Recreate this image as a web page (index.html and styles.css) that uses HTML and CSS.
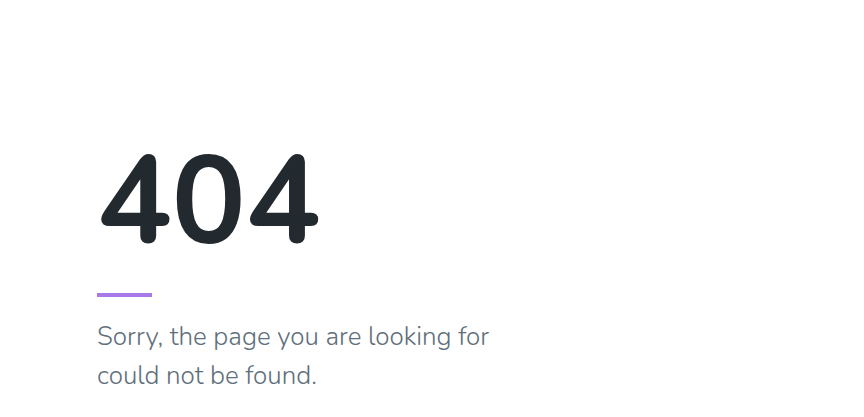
FILE: index.html
```html
<!DOCTYPE html>
<html lang="en">
<head>
<meta charset="utf-8">
<title>Page Not Found</title>
<link rel="stylesheet" href="styles.css">
</head>
<body>
<div class="page">
  <div class="left">
    <div class="content">
      <div class="code">404</div>
      <div class="bar"></div>
      <p class="message">Sorry, the page you are looking for could not be found.</p>
    </div>
  </div>
  <div class="right"></div>
</div>
</body>
</html>
```
FILE: styles.css
```css
html, body {
  margin: 0;
  padding: 0;
  background: #ffffff;
  overflow: hidden;
}
.page {
  display: flex;
  height: 417px;
}
.left {
  width: 60%;
  display: flex;
  align-items: flex-start;
}
.right {
  width: 40%;
}
.content {
  padding: 141px 0 0 97px;
  width: 420px;
}
.code {
  font-family: "Nunito", "Lato", "Noto Sans", sans-serif;
  font-weight: 700;
  font-size: 124px;
  line-height: 124px;
  color: #22292f;
  letter-spacing: 0;
}
.bar {
  width: 55px;
  height: 4px;
  background: #a779e9;
  margin-top: 28px;
}
.message {
  margin: 20px 0 0 0;
  font-family: "Nunito", "Lato", "Noto Sans", sans-serif;
  font-weight: 300;
  font-size: 26px;
  line-height: 39px;
  color: #606f7b;
}
```
